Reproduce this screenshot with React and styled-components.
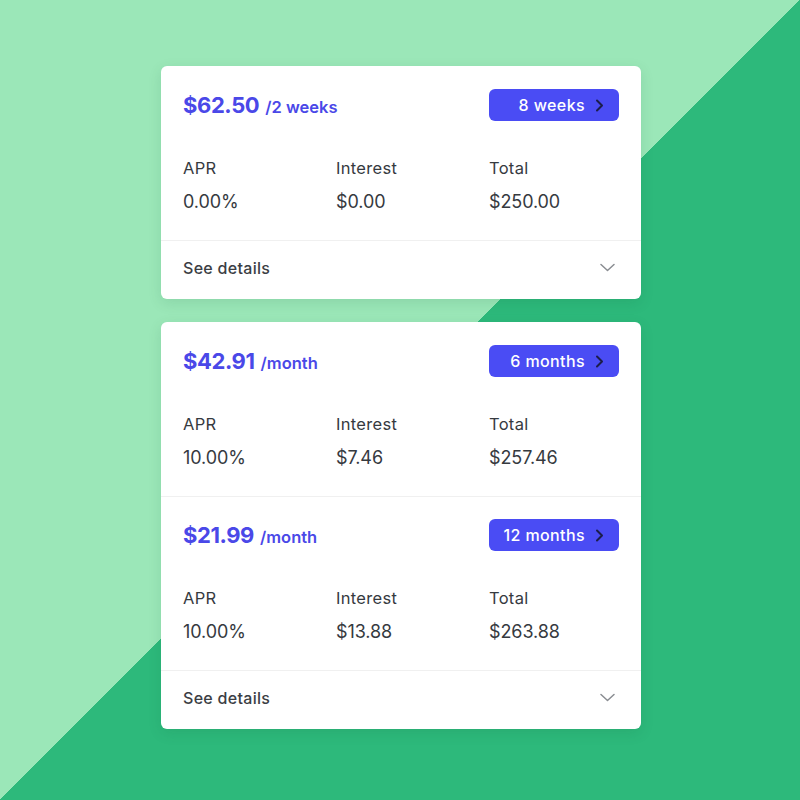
import React from "react";
import styled, { createGlobalStyle } from "styled-components";

const GlobalStyle = createGlobalStyle`
  html, body {
    margin: 0;
    padding: 0;
  }
  body {
    font-family: Inter, "Noto Sans", "Liberation Sans", sans-serif;
    -webkit-font-smoothing: antialiased;
  }
`;

const plans = [
  {
    id: "short",
    options: [
      {
        price: "$62.50",
        period: "/2 weeks",
        term: "8 weeks",
        apr: "0.00%",
        interest: "$0.00",
        total: "$250.00",
      },
    ],
  },
  {
    id: "long",
    options: [
      {
        price: "$42.91",
        period: "/month",
        term: "6 months",
        apr: "10.00%",
        interest: "$7.46",
        total: "$257.46",
      },
      {
        price: "$21.99",
        period: "/month",
        term: "12 months",
        apr: "10.00%",
        interest: "$13.88",
        total: "$263.88",
      },
    ],
  },
];

const Page = styled.div`
  width: 800px;
  height: 800px;
  background: linear-gradient(to bottom right, #9be7b8 50%, #2db97b 50%);
  display: flex;
  flex-direction: column;
  align-items: center;
  padding: 66px 0 0 2px;
  box-sizing: border-box;
  gap: 23px;
`;

const Card = styled.div`
  width: 480px;
  background: #fff;
  border-radius: 6px;
  box-shadow: 0 4px 14px rgba(20, 80, 50, 0.12);
  overflow: hidden;
`;

const Section = styled.div`
  padding: 23px 22px 0 22px;
  height: 174px;
  box-sizing: border-box;
  & + & {
    border-top: 1px solid #f0f0f0;
    padding-top: 22px;
  }
`;

const HeaderRow = styled.div`
  display: flex;
  align-items: center;
  justify-content: space-between;
  height: 32px;
`;

const Price = styled.div`
  display: flex;
  align-items: baseline;
  gap: 6px;
  color: #4a48e8;
  font-weight: 700;
`;

const Amount = styled.span`
  font-size: 22px;
  letter-spacing: -0.4px;
`;

const Period = styled.span`
  font-size: 16.5px;
  font-weight: 600;
`;

const TermButton = styled.button`
  width: 130px;
  height: 32px;
  border: none;
  border-radius: 6px;
  background: #4a4cf4;
  color: #fff;
  font-family: inherit;
  font-size: 16px;
  font-weight: 500;
  letter-spacing: 0.4px;
  display: flex;
  align-items: center;
  justify-content: flex-end;
  gap: 10px;
  padding: 0 15px 0 0;
  svg {
    width: 9px;
    height: 13px;
  }
`;

const Stats = styled.div`
  display: grid;
  grid-template-columns: 153px 153px 1fr;
  margin-top: 36px;
  color: #363a3f;
`;

const Stat = styled.div`
  display: flex;
  flex-direction: column;
  gap: 13px;
`;

const Label = styled.span`
  font-size: 16.5px;
  font-weight: 400;
  line-height: 20px;
  letter-spacing: 0.3px;
  margin-top: 1px;
`;

const Value = styled.span`
  font-size: 18px;
  font-weight: 400;
  line-height: 22px;
  letter-spacing: -0.1px;
`;

const Footer = styled.div`
  border-top: 1px solid #f0f0f0;
  height: 59px;
  padding: 0 26px 5px 22px;
  box-sizing: border-box;
  display: flex;
  align-items: center;
  justify-content: space-between;
  color: #3b3e44;
  font-size: 16px;
  font-weight: 500;
  letter-spacing: 0.3px;
  svg {
    width: 15px;
    height: 9px;
  }
`;

const ChevronRight = () => (
  <svg viewBox="0 0 9 13" fill="none">
    <path
      d="M2 1.5 L7 6.5 L2 11.5"
      stroke="#1c1d4a"
      strokeWidth="2"
      strokeLinecap="round"
      strokeLinejoin="round"
    />
  </svg>
);

const ChevronDown = () => (
  <svg viewBox="0 0 15 9" fill="none">
    <path
      d="M1 1.5 L7.5 7.5 L14 1.5"
      stroke="#8a8d92"
      strokeWidth="1.5"
      strokeLinecap="round"
      strokeLinejoin="round"
    />
  </svg>
);

const Option = ({ option }) => (
  <Section>
    <HeaderRow>
      <Price>
        <Amount>{option.price}</Amount>
        <Period>{option.period}</Period>
      </Price>
      <TermButton>
        {option.term}
        <ChevronRight />
      </TermButton>
    </HeaderRow>
    <Stats>
      <Stat>
        <Label>APR</Label>
        <Value>{option.apr}</Value>
      </Stat>
      <Stat>
        <Label>Interest</Label>
        <Value>{option.interest}</Value>
      </Stat>
      <Stat>
        <Label>Total</Label>
        <Value>{option.total}</Value>
      </Stat>
    </Stats>
  </Section>
);

const App = () => {
  return (
    <>
      <GlobalStyle />
      <Page>
        {plans.map((plan) => (
          <Card key={plan.id}>
            {plan.options.map((option) => (
              <Option key={option.term} option={option} />
            ))}
            <Footer>
              <span>See details</span>
              <ChevronDown />
            </Footer>
          </Card>
        ))}
      </Page>
    </>
  );
};

export default App;
